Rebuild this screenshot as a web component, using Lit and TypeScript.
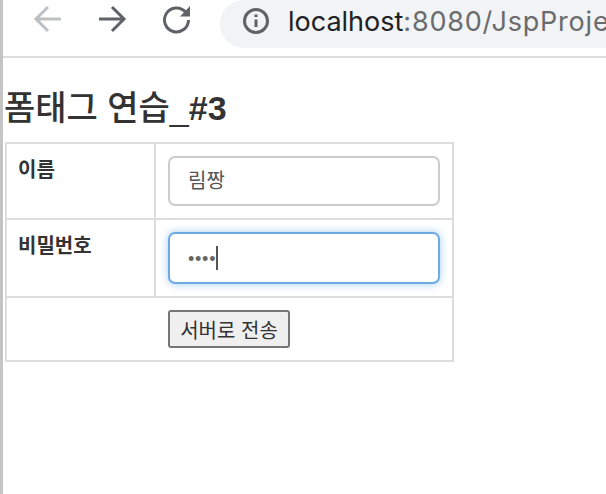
import { LitElement, html, css } from 'lit';
import { customElement } from 'lit/decorators.js';

@customElement('app-root')
export class AppRoot extends LitElement {
  static override styles = css`
    :host {
      display: flex;
      width: 606px;
      height: 494px;
      overflow: hidden;
      background: #fff;
      color: #333;
      font-family: 'Liberation Sans', 'Noto Sans CJK KR', sans-serif;
    }

    .edge {
      flex: 0 0 3px;
      background: #c4c4c4;
    }

    .window {
      flex: 1;
      min-width: 0;
    }

    .toolbar {
      display: flex;
      height: 56px;
      box-sizing: content-box;
      border-bottom: 2px solid #dcdcdc;
      overflow: hidden;
    }

    .nav {
      display: flex;
      flex: 0 0 217px;
      height: 38px;
      padding: 0 0 0 29px;
      box-sizing: border-box;
      gap: 35px;
      align-items: center;
    }

    .nav svg {
      flex: none;
      display: block;
    }

    .address {
      flex: 0 0 386px;
      height: 48px;
      display: flex;
      align-items: center;
      padding: 0 0 6px 22px;
      box-sizing: border-box;
      gap: 18px;
      background: #f1f3f4;
      border-radius: 24px 0 0 24px;
      white-space: nowrap;
      font-family: Inter, 'Liberation Sans', sans-serif;
      font-size: 27px;
      color: #202124;
    }

    .address svg {
      flex: none;
    }

    .address span {
      color: #6a6b6e;
      letter-spacing: 0.8px;
    }

    .page {
      padding: 29px 0 0 2px;
    }

    h1 {
      margin: 0 0 13px -1px;
      font-size: 34px;
      line-height: 42px;
      font-weight: 500;
      color: #333;
    }

    h1 b {
      font-weight: 700;
    }

    table {
      width: 449px;
      table-layout: fixed;
      border-collapse: collapse;
    }

    col.label-col {
      width: 149px;
    }

    td {
      border: 2px solid #ddd;
      padding: 12px;
      vertical-align: top;
      font-size: 20px;
      line-height: 26px;
    }

    td.label {
      font-weight: 700;
      padding: 13px 11px 11px;
    }

    .action {
      padding-right: 13px;
      text-align: center;
    }

    .field {
      width: 272px;
      height: 50px;
      box-sizing: border-box;
      border: 2px solid #ccc;
      border-radius: 7px;
      padding: 0 18px;
      display: flex;
      align-items: center;
      font-size: 20px;
      color: #555;
      background: #fff;
    }

    .field.focused {
      height: 52px;
      border-color: #6eaae4;
      box-shadow: 0 0 8px rgba(102, 175, 233, 0.6);
    }

    .dots {
      font-size: 18px;
      letter-spacing: 0.75px;
      color: #666;
      padding-top: 2px;
    }

    .caret {
      width: 2px;
      height: 24px;
      background: #555;
    }

    .submit {
      display: inline-block;
      vertical-align: top;
      width: 122px;
      height: 38px;
      padding: 0;
      margin: 0;
      box-sizing: border-box;
      border: 2px solid #767676;
      border-radius: 3px;
      background: #efefef;
      color: #333;
      font: 20px 'Liberation Sans', 'Noto Sans CJK KR', sans-serif;
    }
  `;

  override render() {
    return html`
      <div class="edge"></div>
      <div class="window">
        <div class="toolbar">
          <div class="nav">
            <svg width="30" height="30" viewBox="0 0 30 30" fill="none" stroke="#bdc0c3" stroke-width="3">
              <path d="M29 15H5M16 3L4 15L16 27" />
            </svg>
            <svg width="30" height="30" viewBox="0 0 30 30" fill="none" stroke="#5f6368" stroke-width="3">
              <path d="M2 15H27M15 3L27 15L15 27" />
            </svg>
            <svg width="30" height="30" viewBox="0 0 30 30" fill="none">
              <path d="M23.500 8A12 12 0 1 0 26.500 16" stroke="#5f6368" stroke-width="3" />
              <path d="M18 12.500H28V2Z" fill="#5f6368" />
            </svg>
          </div>
          <div class="address">
            <svg width="28" height="28" viewBox="0 0 28 28" fill="none">
              <circle cx="14" cy="14" r="11.500" stroke="#5f6368" stroke-width="3" />
              <path d="M14 12.500V20M14 7.500V10" stroke="#5f6368" stroke-width="3" />
            </svg>
            <div>localhost<span>:8080/JspProje</span></div>
          </div>
        </div>
        <div class="page">
          <h1>폼태그 연습_<b>#3</b></h1>
          <table>
            <colgroup><col class="label-col" /><col /></colgroup>
            <tr>
              <td class="label">이름</td>
              <td><div class="field">림짱</div></td>
            </tr>
            <tr>
              <td class="label">비밀번호</td>
              <td>
                <div class="field focused"><span class="dots">••••</span><span class="caret"></span></div>
              </td>
            </tr>
            <tr>
              <td class="action" colspan="2"><button class="submit">서버로 전송</button></td>
            </tr>
          </table>
        </div>
      </div>
    `;
  }
}
